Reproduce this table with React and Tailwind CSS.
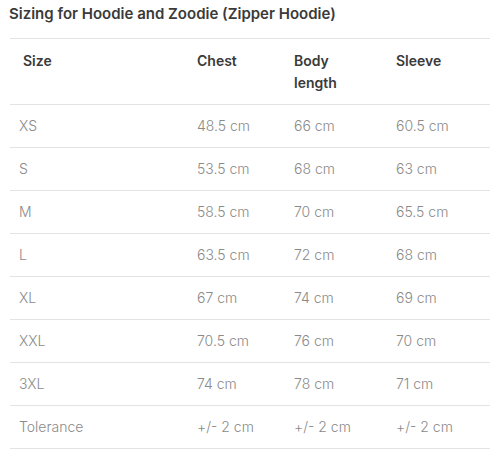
import React from "react";

const rows = [
  ["XS", "48.5 cm", "66 cm", "60.5 cm"],
  ["S", "53.5 cm", "68 cm", "63 cm"],
  ["M", "58.5 cm", "70 cm", "65.5 cm"],
  ["L", "63.5 cm", "72 cm", "68 cm"],
  ["XL", "67 cm", "74 cm", "69 cm"],
  ["XXL", "70.5 cm", "76 cm", "70 cm"],
  ["3XL", "74 cm", "78 cm", "71 cm"],
  ["Tolerance", "+/- 2 cm", "+/- 2 cm", "+/- 2 cm"],
];

export default function App() {
  return (
    <div className="w-[502px] h-[450px] bg-white font-['Inter',sans-serif] overflow-hidden">
      <div className="pl-[9px] pt-[4px] h-[38px] text-[15px] leading-[20px] font-semibold text-[#3a3a3a]">
        Sizing for Hoodie and Zoodie (Zipper Hoodie)
      </div>
      <table className="ml-[10px] w-[480px] border-collapse table-fixed">
        <colgroup>
          <col className="w-[178px]" />
          <col className="w-[97px]" />
          <col className="w-[102px]" />
          <col className="w-[103px]" />
        </colgroup>
        <thead>
          <tr className="border-t border-b border-[#e3e3e3]">
            <th className="text-left align-top pl-[13px] pt-[11px] pb-[10px] text-[14px] leading-[22px] font-semibold text-[#3a3a3a]">Size</th>
            <th className="text-left align-top pl-[9px] pt-[11px] pb-[10px] text-[14px] leading-[22px] font-semibold text-[#3a3a3a]">Chest</th>
            <th className="text-left align-top pl-[9px] pr-[40px] pt-[11px] pb-[10px] text-[14px] leading-[22px] font-semibold text-[#3a3a3a]">Body length</th>
            <th className="text-left align-top pl-[9px] pt-[11px] pb-[10px] text-[14px] leading-[22px] font-semibold text-[#3a3a3a]">Sleeve</th>
          </tr>
        </thead>
        <tbody>
          {rows.map((r) => (
            <tr key={r[0]} className="border-b border-[#e3e3e3]">
              {r.map((c, i) => (
                <td key={i} className="pl-[9px] py-[10px] text-[14px] leading-[22px] font-light text-[#8a8a8a] whitespace-nowrap">
                  {c}
                </td>
              ))}
            </tr>
          ))}
        </tbody>
      </table>
    </div>
  );
}
